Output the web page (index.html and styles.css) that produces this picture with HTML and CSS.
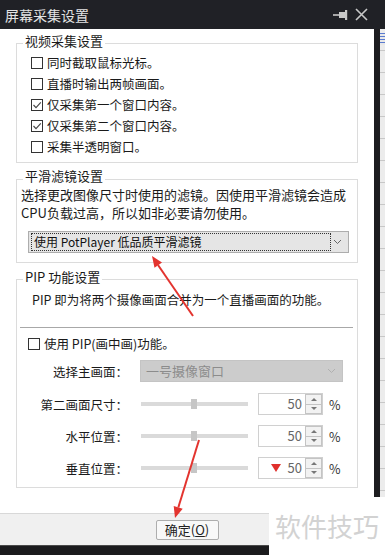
FILE: index.html
```html
<!DOCTYPE html>
<html lang="zh-CN">
<head>
<meta charset="utf-8">
<title>屏幕采集设置</title>
<link rel="stylesheet" href="styles.css">
</head>
<body>
<div class="titlebar">
  <span class="title">屏幕采集设置</span>
  <div class="title-icons">
    <svg class="pin" width="15" height="10" viewBox="0 0 15 10"><line x1="0" y1="5" x2="7" y2="5" stroke="#c8c8c8" stroke-width="1.6"/><rect x="6" y="2" width="6" height="6" fill="#c8c8c8"/><rect x="12" y="0" width="2.2" height="10" fill="#c8c8c8"/></svg>
    <svg class="close" width="13" height="13" viewBox="0 0 13 13"><path d="M1 1 L12 12 M12 1 L1 12" stroke="#c8c8c8" stroke-width="1.6" fill="none"/></svg>
  </div>
</div>
<div class="main">
  <div class="dialog">
    <div class="content">
      <div class="group g1">
        <div class="group-title">视频采集设置</div>
        <div class="cb-list">
          <div class="cb-row"><span class="cb"></span>同时截取鼠标光标。</div>
          <div class="cb-row"><span class="cb"></span>直播时输出两帧画面。</div>
          <div class="cb-row"><span class="cb"><svg width="10" height="10" viewBox="0 0 10 10"><path d="M1.5 5 L4 7.6 L8.8 2.4" stroke="#444" stroke-width="1.1" fill="none"/></svg></span>仅采集第一个窗口内容。</div>
          <div class="cb-row"><span class="cb"><svg width="10" height="10" viewBox="0 0 10 10"><path d="M1.5 5 L4 7.6 L8.8 2.4" stroke="#444" stroke-width="1.1" fill="none"/></svg></span>仅采集第二个窗口内容。</div>
          <div class="cb-row"><span class="cb"></span>采集半透明窗口。</div>
        </div>
      </div>
      <div class="group g2">
        <div class="group-title">平滑滤镜设置</div>
        <div class="desc">选择更改图像尺寸时使用的滤镜。因使用平滑滤镜会造成<br>CPU负载过高，所以如非必要请勿使用。</div>
        <div class="select">
          <div class="focus">使用 PotPlayer 低品质平滑滤镜</div>
          <svg class="chev" width="9" height="6" viewBox="0 0 9 6"><path d="M1 1 L4.5 4.5 L8 1" stroke="#666" stroke-width="1" fill="none"/></svg>
        </div>
      </div>
      <div class="group g3">
        <div class="group-title">PIP 功能设置</div>
        <div class="pip-desc">PIP 即为将两个摄像画面合并为一个直播画面的功能。</div>
        <div class="sep"></div>
        <div class="cb-row pip-cb"><span class="cb"></span>使用 PIP(画中画)功能。</div>
        <div class="form-row sel-row">
          <span class="label">选择主画面：</span>
          <div class="select disabled">
            <span class="sel-text">一号摄像窗口</span>
            <svg class="chev" width="9" height="6" viewBox="0 0 9 6"><path d="M1 1 L4.5 4.5 L8 1" stroke="#b0b0b0" stroke-width="1" fill="none"/></svg>
          </div>
        </div>
        <div class="form-row slider-row">
          <span class="label">第二画面尺寸：</span>
          <div class="slider"><div class="track"></div><div class="thumb"></div></div>
          <div class="spin"><span class="val">50</span><div class="spin-btns"><span class="sb up"></span><span class="sb down"></span></div></div>
          <span class="pct">%</span>
        </div>
        <div class="form-row slider-row">
          <span class="label">水平位置：</span>
          <div class="slider"><div class="track"></div><div class="thumb"></div></div>
          <div class="spin"><span class="val">50</span><div class="spin-btns"><span class="sb up"></span><span class="sb down"></span></div></div>
          <span class="pct">%</span>
        </div>
        <div class="form-row slider-row">
          <span class="label">垂直位置：</span>
          <div class="slider"><div class="track"></div><div class="thumb"></div></div>
          <div class="spin"><span class="val"><span class="redtri"></span>50</span><div class="spin-btns"><span class="sb up"></span><span class="sb down"></span></div></div>
          <span class="pct">%</span>
        </div>
      </div>
    </div>
    <div class="footer">
      <button class="btn">确定(<u>O</u>)</button>
    </div>
  </div>
  <div class="side">
    <div class="side-dark"></div>
    <div class="side-light"><div class="side-icon"></div></div>
  </div>
</div>
<div class="band"></div>
<div class="watermark">软件技巧</div>
<svg class="arrows" width="385" height="555" viewBox="0 0 385 555">
  <line x1="193" y1="316" x2="158" y2="265" stroke="#e3342f" stroke-width="2"/>
  <polygon points="152,256 162,262.6 154.5,267.8" fill="#e3342f"/>
  <line x1="199" y1="440" x2="178.3" y2="507.5" stroke="#e3342f" stroke-width="2"/>
  <polygon points="175,518 182.7,508.8 173.7,506" fill="#e3342f"/>
</svg>
</body>
</html>
```

FILE: styles.css
```css
* { box-sizing: border-box; }
html, body { margin: 0; padding: 0; }
body {
  width: 385px;
  height: 555px;
  overflow: hidden;
  position: relative;
  background: #fff;
  font-family: "Noto Sans CJK SC", "Noto Sans", sans-serif;
  color: #1a1a1a;
  font-size: 12.5px;
}
.titlebar {
  height: 29px;
  background: #202126;
  display: flex;
  align-items: center;
  padding: 0 17px 0 5px;
  color: #e4e4e4;
}
.title { font-size: 14px; line-height: 18px; }
.title-icons { margin-left: auto; display: flex; align-items: center; gap: 7px; }
.pin { display: block; margin-top: 1px; }
.close { display: block; }

.main { display: flex; height: 516px; }
.dialog { width: 374px; display: flex; flex-direction: column; background: #fff; }
.content { height: 484px; padding-top: 14px; }

.group {
  margin: 0 16px;
  border: 1px solid #dcdcdc;
}
.g2, .g3 { margin-top: 16px; }
.group-title {
  width: fit-content;
  margin: -11px 0 0 6px;
  padding: 0 2px;
  background: #fff;
  line-height: 16px;
  font-size: 13px;
}
.g2 .group-title { margin-top: -12px; }
.cb-list { padding: 3px 0 5px 14px; }
.cb-row { display: flex; align-items: center; height: 21px; line-height: 21px; white-space: nowrap; }
.cb {
  width: 12px; height: 12px;
  border: 1px solid #333;
  background: #fff;
  margin-right: 4px;
  display: flex; align-items: center; justify-content: center;
  flex: none;
}
.cb svg { display: block; }

.desc {
  margin-top: 2px;
  padding-left: 4px;
  line-height: 18px;
  font-size: 13px;
  white-space: nowrap;
}
.g2 { padding-bottom: 9px; }
.select {
  position: relative;
  height: 22px;
  border: 1px solid #adadad;
  background: #e5e5e5;
  display: flex;
  align-items: center;
}
.g2 .select { margin: 9px 8px 0 11px; }
.focus {
  margin: 0 0 0 2px;
  width: 300px;
  height: 18px;
  border: 1px dotted #333;
  line-height: 16px;
  padding-left: 2px;
  font-size: 12px;
  color: #111;
  white-space: nowrap;
}
.chev { display: block; margin-left: auto; margin-right: 6px; }

.g3 { padding-bottom: 8px; }
.pip-desc { margin-top: 6px; padding-left: 15px; line-height: 18px; white-space: nowrap; }
.sep { margin: 18px 4px 0 3px; height: 1px; background: #a8a8a8; }
.pip-cb { margin-top: 5px; padding-left: 11px; }

.form-row { display: flex; align-items: center; height: 22px; }
.label { width: 111px; text-align: right; white-space: nowrap; flex: none; }
.sel-row { margin-top: 6px; }
.select.disabled {
  margin-left: 12px;
  width: 203px;
  background: #cccccc;
  border-color: #c4c4c4;
  color: #8c8c8c;
}
.sel-text { padding-left: 5px; line-height: 20px; font-size: 13px; }
.slider-row { margin-top: 10px; }
.sel-row + .slider-row { margin-top: 11px; }
.slider { position: relative; width: 107px; height: 12px; margin-left: 13px; display: flex; align-items: center; }
.track { width: 100%; height: 4px; background: #dadada; }
.thumb { position: absolute; left: 50px; top: 1px; width: 6px; height: 10px; background: #c6c6c6; }
.spin {
  margin-left: 10px;
  width: 65px;
  height: 22px;
  border: 1px solid #d0d0d0;
  background: #fff;
  display: flex;
  align-items: center;
}
.val {
  flex: 1;
  text-align: right;
  padding-right: 3px;
  color: #666;
  font-size: 13px;
  line-height: 20px;
  display: flex;
  align-items: center;
  justify-content: flex-end;
}
.redtri {
  width: 0; height: 0;
  border-left: 5px solid transparent;
  border-right: 5px solid transparent;
  border-top: 8px solid #e0302c;
  margin-right: 7px;
}
.spin-btns { width: 17px; height: 20px; display: flex; flex-direction: column; }
.sb {
  flex: 1;
  border: 1px solid #c4c4c4;
  background: #f2f2f2;
  display: flex; align-items: center; justify-content: center;
}
.sb.down { border-top: none; }
.sb::after {
  content: "";
  width: 0; height: 0;
  border-left: 3px solid transparent;
  border-right: 3px solid transparent;
}
.sb.up::after { border-bottom: 3px solid #777; }
.sb.down::after { border-top: 3px solid #777; }
.pct { margin-left: 6px; color: #333; }

.footer {
  height: 32px;
  background: #f0f0f0;
  border-top: 1px solid #d8d8d8;
  display: flex;
  align-items: center;
  justify-content: center;
}
.btn {
  width: 63px;
  height: 20px;
  padding: 0;
  border: 1px solid #adadad;
  border-radius: 2px;
  background: #f8f8f8;
  font-family: "Noto Sans CJK SC", "Noto Sans", sans-serif;
  font-size: 13px;
  line-height: 18px;
  color: #222;
}
.side { width: 11px; display: flex; }
.side-dark { width: 6px; background: #1d1d20; }
.side-light {
  width: 5px;
  background: repeating-linear-gradient(to bottom, #ececec 0, #ececec 21px, #c8c8c8 21px, #c8c8c8 22px);
  padding-top: 4px;
}
.side-icon { height: 12px; background: repeating-linear-gradient(to bottom, #5a7bd0 0, #5a7bd0 1px, #e8e8e8 1px, #e8e8e8 3px); }
.band { height: 10px; background: #1b1b1d; border-top: 1px solid #4a4a4a; }
.watermark {
  position: absolute;
  left: 269px;
  top: 497px;
  right: 0;
  bottom: 0;
  background: #fff;
  padding: 14px 0 0 6px;
  font-size: 26px;
  line-height: 30px;
  color: #d2d2d2;
  white-space: nowrap;
}
.arrows { position: absolute; left: 0; top: 0; pointer-events: none; }
```
